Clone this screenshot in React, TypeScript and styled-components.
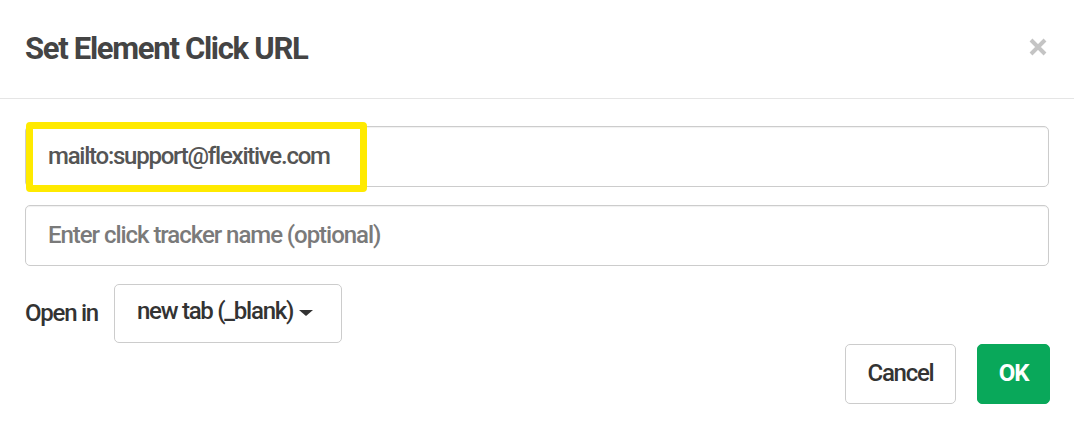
import React from "react";
import styled, { createGlobalStyle } from "styled-components";

const GlobalStyle = createGlobalStyle`
  html, body {
    margin: 0;
    padding: 0;
    background: #ffffff;
  }
  body {
    font-family: Roboto, "Liberation Sans", Arial, sans-serif;
  }
  * { box-sizing: border-box; }
`;

const Dialog = styled.div`
  width: 1074px;
  height: 446px;
  background: #ffffff;
  display: flex;
  flex-direction: column;
  font-family: Roboto, "Liberation Sans", Arial, sans-serif;
`;

const Header = styled.div`
  height: 99px;
  border-bottom: 1px solid #e5e5e5;
  display: flex;
  align-items: center;
  justify-content: space-between;
  padding: 0 27px 4px 25px;
`;

const Title = styled.h1`
  margin: 0;
  font-size: 31px;
  font-weight: 700;
  letter-spacing: -1.3px;
  color: #444444;
  line-height: 1;
  padding-top: 3px;
`;

const Close = styled.button`
  border: none;
  background: transparent;
  padding: 0;
  width: 18px;
  height: 18px;
  display: flex;
  align-items: center;
  justify-content: center;
  cursor: pointer;
`;

const Body = styled.div`
  display: flex;
  flex-direction: column;
  padding: 27px 25px 0 25px;
`;

const InputWrap = styled.div<{ $gap?: number }>`
  position: relative;
  height: 61px;
  margin-bottom: ${(p) => p.$gap ?? 0}px;
`;

const TextInput = styled.input`
  width: 100%;
  height: 100%;
  border: 1px solid #cccccc;
  border-radius: 5px;
  padding: 0 22px 2px 22px;
  font-family: inherit;
  font-size: 24px;
  font-weight: 500;
  letter-spacing: -1.25px;
  color: #555555;
  background: #fff;
  box-shadow: inset 0 1px 1px rgba(0, 0, 0, 0.06);
  outline: none;
  &::placeholder {
    color: #7a7a7a;
    opacity: 1;
    letter-spacing: -1.05px;
  }
`;

const Highlight = styled.div`
  position: absolute;
  left: 1px;
  top: -4px;
  width: 341px;
  height: 70px;
  border: 7px solid #ffea00;
  border-radius: 4px;
  pointer-events: none;
`;

const OpenRow = styled.div`
  display: flex;
  align-items: center;
  gap: 16px;
  margin-top: 18px;
`;

const Label = styled.span`
  font-size: 24px;
  font-weight: 500;
  letter-spacing: -1.25px;
  color: #333333;
  padding-bottom: 2px;
`;

const SelectButton = styled.button`
  height: 59px;
  width: 228px;
  border: 1px solid #cccccc;
  border-radius: 5px;
  background: #ffffff;
  font-family: inherit;
  font-size: 24px;
  font-weight: 500;
  letter-spacing: -1.25px;
  color: #333333;
  display: flex;
  align-items: center;
  justify-content: flex-start;
  gap: 6px;
  padding: 0 0 6px 22px;
`;

const Caret = styled.span`
  width: 0;
  height: 0;
  border-left: 7px solid transparent;
  border-right: 7px solid transparent;
  border-top: 6px solid #333333;
  margin-top: 5px;
`;

const Footer = styled.div`
  display: flex;
  justify-content: flex-end;
  gap: 21px;
  padding: 0 24px 0 25px;
  margin-top: 1px;
`;

const Button = styled.button<{ $primary?: boolean }>`
  height: 60px;
  border-radius: 5px;
  border: 1px solid ${(p) => (p.$primary ? "#09a85a" : "#cccccc")};
  background: ${(p) => (p.$primary ? "#09a85a" : "#ffffff")};
  color: ${(p) => (p.$primary ? "#ffffff" : "#333333")};
  font-family: inherit;
  font-size: 24px;
  letter-spacing: -1.25px;
  font-weight: ${(p) => (p.$primary ? 700 : 500)};
  width: ${(p) => (p.$primary ? 73 : 111)}px;
  padding: 0 0 3px 0;
  display: flex;
  align-items: center;
  justify-content: center;
`;

export default function App() {
  return (
    <>
      <GlobalStyle />
      <Dialog>
        <Header>
          <Title>Set Element Click URL</Title>
          <Close aria-label="Close">
            <svg width="18" height="18" viewBox="0 0 18 18">
              <path d="M2 2 L16 16 M16 2 L2 16" stroke="#c4c4c4" strokeWidth="4" />
            </svg>
          </Close>
        </Header>
        <Body>
          <InputWrap $gap={18}>
            <TextInput defaultValue="mailto:support@flexitive.com" />
            <Highlight />
          </InputWrap>
          <InputWrap>
            <TextInput placeholder="Enter click tracker name (optional)" />
          </InputWrap>
          <OpenRow>
            <Label>Open in</Label>
            <SelectButton>
              new tab (_blank)
              <Caret />
            </SelectButton>
          </OpenRow>
        </Body>
        <Footer>
          <Button>Cancel</Button>
          <Button $primary>OK</Button>
        </Footer>
      </Dialog>
    </>
  );
}
